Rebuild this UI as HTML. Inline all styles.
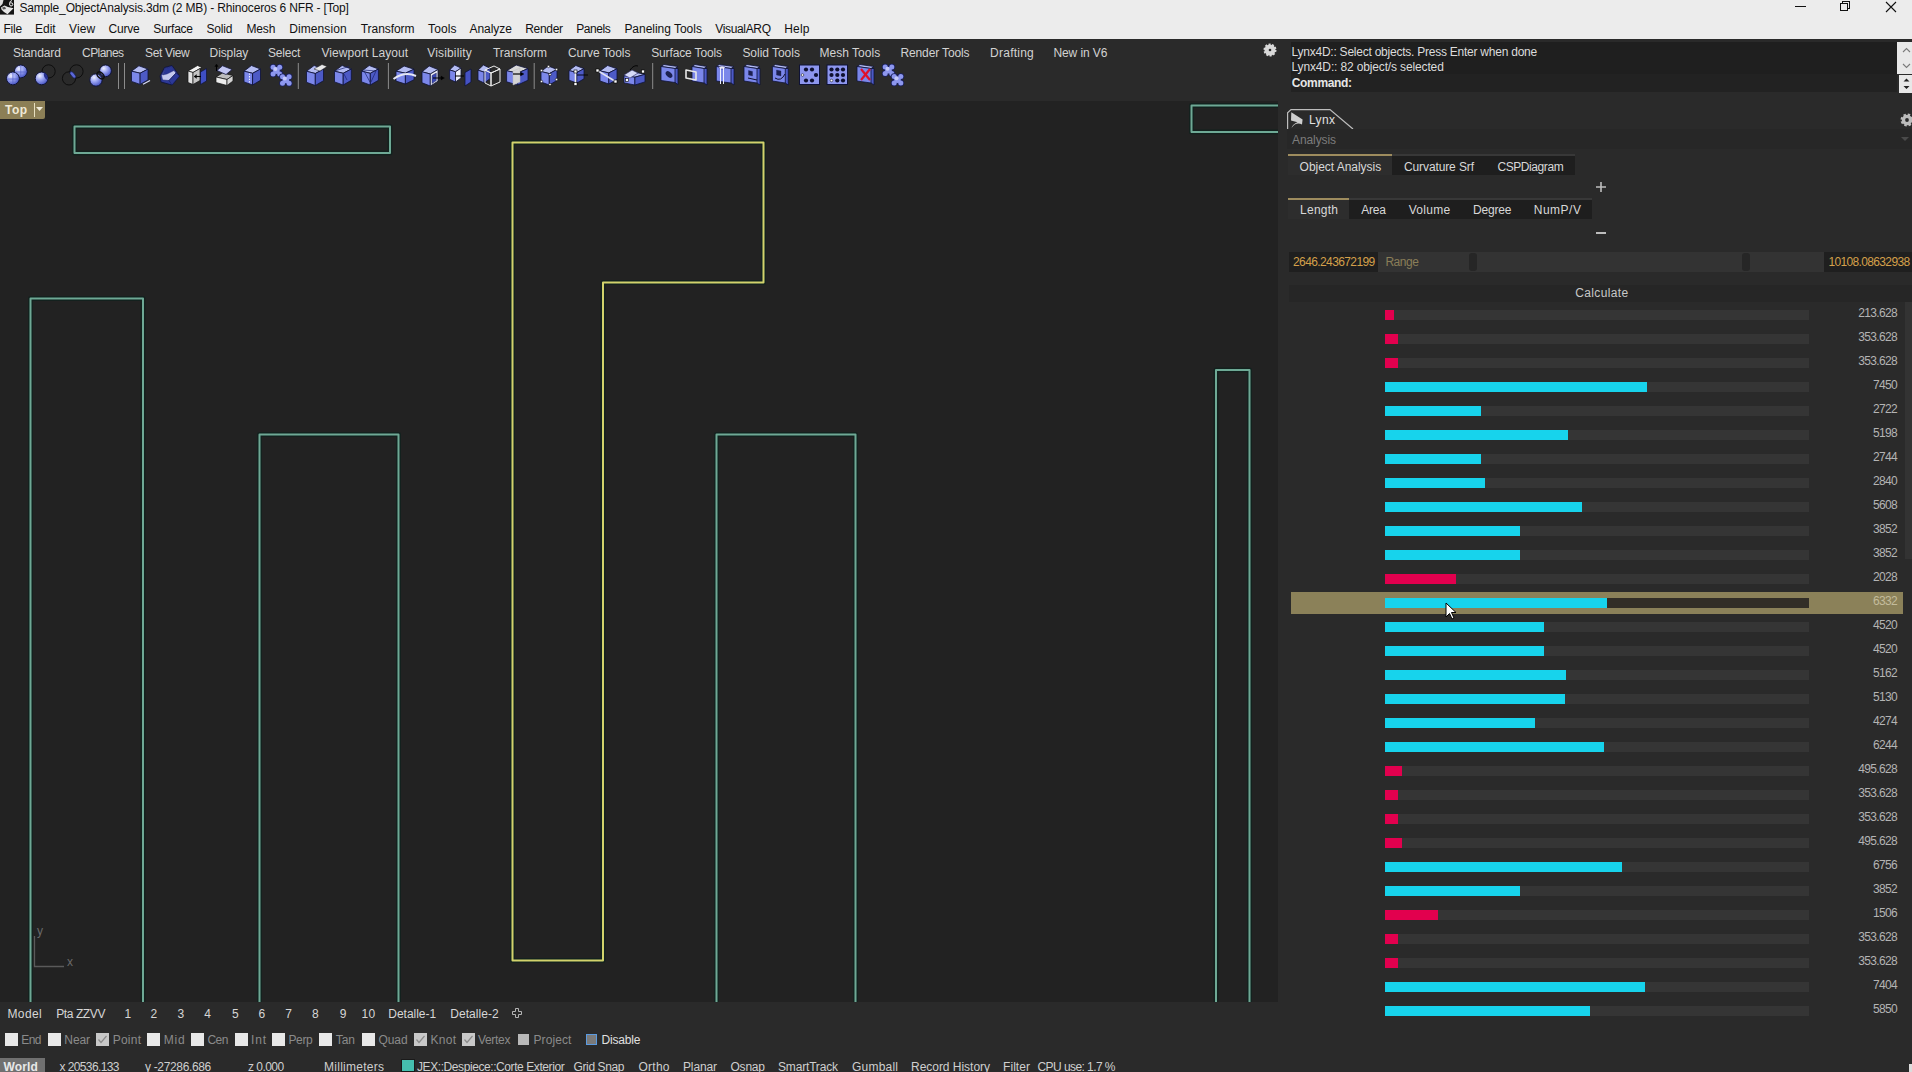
<!DOCTYPE html><html><head><meta charset="utf-8"><style>
*{margin:0;padding:0;box-sizing:border-box}
html,body{width:1912px;height:1072px;overflow:hidden;background:#2a2a2a;font-family:"Liberation Sans",sans-serif;font-size:12px}
.a{position:absolute;white-space:nowrap}
.row{position:absolute;left:1385px;width:424px;height:10px;background:#353535}
.c{background:#17d3ec}
.r{background:#e2004e}
.ck{position:absolute;top:1033px;width:13px;height:13px;background:#e8e8e8}
</style></head><body>
<div class="a" style="left:0px;top:0px;width:1912px;height:39px;background:#ececec;"></div>
<svg class="a" style="left:0;top:0" width="15" height="16" viewBox="0 0 15 16"><rect x="0" y="0" width="14" height="14.6" fill="#151515"/><path d="M0,0H3.5L2.5,4L0,6.5Z" fill="#dcdcdc"/><path d="M1,7.5L4.5,5.5L8,7L13.5,8.2L7.5,14.2L4,12L1.5,9.5Z" fill="#e6e6e6"/><path d="M2,7.5L5,6.8L6,9L3,9.5Z" fill="#555"/><path d="M12,0.5Q9.5,1 9.5,3.8Q9.5,6 11,6Q12.8,6 12.8,4.3Q12.8,2.8 11,2.8Q10.3,2.8 9.8,3.3" fill="none" stroke="#f0f0f0" stroke-width="1"/></svg>
<div class="a" style="left:19.4px;top:1px;color:#111;font-weight:400;font-size:12px;letter-spacing:-0.159px;">Sample_ObjectAnalysis.3dm (2 MB) - Rhinoceros 6 NFR - [Top]</div>
<div class="a" style="left:3.5px;top:22px;color:#111;font-weight:400;font-size:12px;letter-spacing:-0.248px;">File</div>
<div class="a" style="left:35.1px;top:22px;color:#111;font-weight:400;font-size:12px;letter-spacing:-0.029px;">Edit</div>
<div class="a" style="left:69px;top:22px;color:#111;font-weight:400;font-size:12px;letter-spacing:0.101px;">View</div>
<div class="a" style="left:108.5px;top:22px;color:#111;font-weight:400;font-size:12px;letter-spacing:-0.179px;">Curve</div>
<div class="a" style="left:153.2px;top:22px;color:#111;font-weight:400;font-size:12px;letter-spacing:-0.260px;">Surface</div>
<div class="a" style="left:206.4px;top:22px;color:#111;font-weight:400;font-size:12px;letter-spacing:-0.147px;">Solid</div>
<div class="a" style="left:246.5px;top:22px;color:#111;font-weight:400;font-size:12px;letter-spacing:-0.148px;">Mesh</div>
<div class="a" style="left:289.2px;top:22px;color:#111;font-weight:400;font-size:12px;letter-spacing:0.100px;">Dimension</div>
<div class="a" style="left:360.8px;top:22px;color:#111;font-weight:400;font-size:12px;letter-spacing:-0.067px;">Transform</div>
<div class="a" style="left:428px;top:22px;color:#111;font-weight:400;font-size:12px;letter-spacing:0.146px;">Tools</div>
<div class="a" style="left:469.5px;top:22px;color:#111;font-weight:400;font-size:12px;letter-spacing:-0.051px;">Analyze</div>
<div class="a" style="left:525.2px;top:22px;color:#111;font-weight:400;font-size:12px;letter-spacing:-0.292px;">Render</div>
<div class="a" style="left:576.2px;top:22px;color:#111;font-weight:400;font-size:12px;letter-spacing:-0.421px;">Panels</div>
<div class="a" style="left:624.4px;top:22px;color:#111;font-weight:400;font-size:12px;letter-spacing:-0.026px;">Paneling Tools</div>
<div class="a" style="left:715.2px;top:22px;color:#111;font-weight:400;font-size:12px;letter-spacing:-0.336px;">VisualARQ</div>
<div class="a" style="left:784.3px;top:22px;color:#111;font-weight:400;font-size:12px;letter-spacing:0.138px;">Help</div>
<div class="a" style="left:1795px;top:6px;width:11px;height:1px;background:#111;"></div>
<div class="a" style="left:1842px;top:1px;width:8px;height:8px;border:1px solid #111"></div><div class="a" style="left:1840px;top:3px;width:8px;height:8px;border:1px solid #111;background:#ececec"></div>
<svg class="a" style="left:1885px;top:1px" width="12" height="12"><path d="M1,1L11,11M11,1L1,11" stroke="#111" stroke-width="1.1"/></svg>
<div class="a" style="left:13px;top:46px;color:#d2d2d2;font-weight:400;font-size:12px;letter-spacing:-0.129px;">Standard</div>
<div class="a" style="left:82.1px;top:46px;color:#d2d2d2;font-weight:400;font-size:12px;letter-spacing:-0.577px;">CPlanes</div>
<div class="a" style="left:145.1px;top:46px;color:#d2d2d2;font-weight:400;font-size:12px;letter-spacing:-0.349px;">Set View</div>
<div class="a" style="left:209.6px;top:46px;color:#d2d2d2;font-weight:400;font-size:12px;letter-spacing:-0.110px;">Display</div>
<div class="a" style="left:268.1px;top:46px;color:#d2d2d2;font-weight:400;font-size:12px;letter-spacing:-0.232px;">Select</div>
<div class="a" style="left:321.4px;top:46px;color:#d2d2d2;font-weight:400;font-size:12px;letter-spacing:0.068px;">Viewport Layout</div>
<div class="a" style="left:427.3px;top:46px;color:#d2d2d2;font-weight:400;font-size:12px;letter-spacing:0.153px;">Visibility</div>
<div class="a" style="left:493px;top:46px;color:#d2d2d2;font-weight:400;font-size:12px;letter-spacing:-0.029px;">Transform</div>
<div class="a" style="left:567.9px;top:46px;color:#d2d2d2;font-weight:400;font-size:12px;letter-spacing:-0.064px;">Curve Tools</div>
<div class="a" style="left:651.2px;top:46px;color:#d2d2d2;font-weight:400;font-size:12px;letter-spacing:-0.142px;">Surface Tools</div>
<div class="a" style="left:742.4px;top:46px;color:#d2d2d2;font-weight:400;font-size:12px;letter-spacing:-0.033px;">Solid Tools</div>
<div class="a" style="left:819.4px;top:46px;color:#d2d2d2;font-weight:400;font-size:12px;letter-spacing:0.035px;">Mesh Tools</div>
<div class="a" style="left:900.5px;top:46px;color:#d2d2d2;font-weight:400;font-size:12px;letter-spacing:-0.136px;">Render Tools</div>
<div class="a" style="left:990.1px;top:46px;color:#d2d2d2;font-weight:400;font-size:12px;letter-spacing:0.238px;">Drafting</div>
<div class="a" style="left:1053.4px;top:46px;color:#d2d2d2;font-weight:400;font-size:12px;letter-spacing:-0.088px;">New in V6</div>
<svg class="a" style="left:0;top:0" width="920" height="95" viewBox="0 0 920 95">
<defs><radialGradient id="sg" cx="0.35" cy="0.3" r="0.75"><stop offset="0" stop-color="#eef0ff"/><stop offset="0.45" stop-color="#9aa4f2"/><stop offset="1" stop-color="#4350c0"/></radialGradient></defs>
<circle cx="20.8" cy="71.4" r="6.4" fill="url(#sg)" stroke="#0e1236" stroke-width="1"/>
<circle cx="12.9" cy="78.4" r="6.4" fill="url(#sg)" stroke="#0e1236" stroke-width="1"/>
<line x1="12.9" y1="72" x2="12.9" y2="84.5" stroke="#5560c8" stroke-width="0.7"/><line x1="7" y1="79" x2="19" y2="79" stroke="#5560c8" stroke-width="0.7"/>
<line x1="20.8" y1="65.2" x2="20.8" y2="77.5" stroke="#5560c8" stroke-width="0.7"/><line x1="14.8" y1="72" x2="27" y2="72" stroke="#5560c8" stroke-width="0.7"/>
<circle cx="48.6" cy="71.4" r="6.6" fill="none" stroke="#0a0a0a" stroke-width="0.9"/>
<circle cx="41.6" cy="78.4" r="6.4" fill="url(#sg)" stroke="#0e1236" stroke-width="1"/>
<path d="M44,72.5 Q49,75 47,80 Q43,77 44,72.5Z" fill="#26308e"/>
<circle cx="76.5" cy="71.4" r="6.6" fill="none" stroke="#0a0a0a" stroke-width="0.9"/>
<circle cx="69" cy="78.4" r="6.6" fill="none" stroke="#0a0a0a" stroke-width="0.9"/>
<ellipse cx="72.9" cy="74.9" rx="1.8" ry="4" transform="rotate(-40 72.9 74.9)" fill="#5c68d8" stroke="#101848" stroke-width="0.6"/>
<circle cx="105.5" cy="70.8" r="5.9" fill="url(#sg)" stroke="#0e1236" stroke-width="1"/>
<circle cx="96" cy="80" r="6.2" fill="url(#sg)" stroke="#0e1236" stroke-width="1"/>
<ellipse cx="100.6" cy="75.4" rx="2.6" ry="4.2" transform="rotate(-45 100.6 75.4)" fill="none" stroke="#101010" stroke-width="1.4"/>
<line x1="118.5" y1="63" x2="118.5" y2="89" stroke="#8c8c8c" stroke-width="1"/>
<line x1="124.5" y1="63" x2="124.5" y2="89" stroke="#8c8c8c" stroke-width="1"/>
<polygon points="131.5,71.2 138.9,65.8 148.0,69.1 140.1,73.2" fill="#b4bcf2" stroke="#0e1236" stroke-width="0.8" stroke-linejoin="round"/><polygon points="131.5,71.2 140.1,73.2 140.1,84.4 131.5,81.4" fill="#7b87ea" stroke="#0e1236" stroke-width="0.8" stroke-linejoin="round"/><polygon points="140.1,73.2 148.0,69.1 148.0,79.9 140.1,84.4" fill="#4d5ac6" stroke="#0e1236" stroke-width="0.8" stroke-linejoin="round"/><line x1="143" y1="84.2" x2="150" y2="80.5" stroke="#d8dcf8" stroke-width="1.3"/>
<polygon points="160.0,76.0 164.5,67.5 172.0,65.5 179.5,76.0 172.0,85.0 161.0,82.0" fill="#2c3896" stroke="#0e1236" stroke-width="0.8" stroke-linejoin="round"/>
<polygon points="161.5,75.5 165.5,68.5 171.5,67.0 176.0,73.0 169.0,80.5 162.5,80.0" fill="#c4c9ee" stroke="#18206a" stroke-width="0.6" stroke-linejoin="round"/>
<polygon points="165.5,68.5 171.5,67.0 174.0,70.5 167.0,74.0 162.5,75.0" fill="#2a3694" stroke="#18206a" stroke-width="0.4" stroke-linejoin="round"/>
<polygon points="169.0,80.5 176.0,73.0 179.5,76.0 172.0,85.0" fill="#2c3896" stroke="#10184a" stroke-width="0.5" stroke-linejoin="round"/>
<polygon points="188.0,71.0 197.5,65.5 202.0,67.5 193.0,72.5" fill="#f2f2f2" stroke="#111" stroke-width="0.7" stroke-linejoin="round"/>
<polygon points="188.0,71.0 193.0,72.5 193.0,84.5 188.0,82.5" fill="#e4e4e4" stroke="#111" stroke-width="0.7" stroke-linejoin="round"/>
<polygon points="193.0,72.5 200.0,68.5 200.0,80.5 193.0,84.5" fill="#c4c4c4" stroke="#111" stroke-width="0.7" stroke-linejoin="round"/>
<polygon points="200.5,72.0 206.5,68.5 206.5,81.0 200.5,84.5" fill="#3e4ec2" stroke="#0e1236" stroke-width="0.7" stroke-linejoin="round"/>
<line x1="194.5" y1="76.5" x2="201" y2="76.5" stroke="#000" stroke-width="1.1"/><polygon points="194.0,76.5 196.5,74.5 196.5,78.5" fill="#000" stroke="#000" stroke-width="0.3" stroke-linejoin="round"/>
<polygon points="216.0,77.0 222.5,73.0 233.0,75.5 227.0,79.5" fill="#bdbdbd" stroke="#111" stroke-width="0.7" stroke-linejoin="round"/>
<polygon points="216.0,77.0 227.0,79.5 227.0,85.5 216.0,82.5" fill="#ececec" stroke="#111" stroke-width="0.7" stroke-linejoin="round"/>
<polygon points="227.0,79.5 233.0,75.5 233.0,81.0 227.0,85.5" fill="#d4d4d4" stroke="#111" stroke-width="0.7" stroke-linejoin="round"/>
<polygon points="217.0,70.5 222.5,65.8 232.0,69.5 226.0,74.5" fill="#c2c6f2" stroke="#101440" stroke-width="0.7" stroke-linejoin="round"/>
<line x1="216.5" y1="71" x2="216.5" y2="65" stroke="#000" stroke-width="1"/><polygon points="216.5,64.0 214.8,66.5 218.2,66.5" fill="#000" stroke="#000" stroke-width="0.3" stroke-linejoin="round"/>
<polygon points="244.0,71.2 251.4,65.5 260.5,69.0 252.6,73.3" fill="#b4bcf2" stroke="#0e1236" stroke-width="0.8" stroke-linejoin="round"/><polygon points="244.0,71.2 252.6,73.3 252.6,85.0 244.0,81.9" fill="#7b87ea" stroke="#0e1236" stroke-width="0.8" stroke-linejoin="round"/><polygon points="252.6,73.3 260.5,69.0 260.5,80.3 252.6,85.0" fill="#4d5ac6" stroke="#0e1236" stroke-width="0.8" stroke-linejoin="round"/>
<line x1="249.5" y1="73.5" x2="249.5" y2="83" stroke="#f0f2ff" stroke-width="1.1" stroke-dasharray="1.3 1.3"/>
<circle cx="276.4" cy="70.6" r="4.1" fill="#1a2060"/><circle cx="273.1" cy="67.3" r="3.3" fill="#1a2060"/><circle cx="279.7" cy="67.3" r="3.3" fill="#1a2060"/><circle cx="273.1" cy="73.9" r="3.3" fill="#1a2060"/><circle cx="279.7" cy="73.9" r="3.3" fill="#1a2060"/><circle cx="276.4" cy="70.6" r="3.3" fill="#8d97ee"/><circle cx="273.1" cy="67.3" r="2.5" fill="#8d97ee"/><circle cx="279.7" cy="67.3" r="2.5" fill="#8d97ee"/><circle cx="273.1" cy="73.9" r="2.5" fill="#8d97ee"/><circle cx="279.7" cy="73.9" r="2.5" fill="#8d97ee"/><circle cx="275.4" cy="69.1" r="2" fill="#c4c9f8"/>
<circle cx="285.8" cy="80.0" r="4.1" fill="#1a2060"/><circle cx="282.5" cy="76.7" r="3.3" fill="#1a2060"/><circle cx="289.1" cy="76.7" r="3.3" fill="#1a2060"/><circle cx="282.5" cy="83.3" r="3.3" fill="#1a2060"/><circle cx="289.1" cy="83.3" r="3.3" fill="#1a2060"/><circle cx="285.8" cy="80.0" r="3.3" fill="#8d97ee"/><circle cx="282.5" cy="76.7" r="2.5" fill="#8d97ee"/><circle cx="289.1" cy="76.7" r="2.5" fill="#8d97ee"/><circle cx="282.5" cy="83.3" r="2.5" fill="#8d97ee"/><circle cx="289.1" cy="83.3" r="2.5" fill="#8d97ee"/><circle cx="284.8" cy="78.5" r="2" fill="#c4c9f8"/>
<line x1="298.3" y1="63" x2="298.3" y2="89" stroke="#8c8c8c" stroke-width="1"/>
<polygon points="306.5,71.3 314.1,65.5 323.5,69.1 315.3,73.5" fill="#b4bcf2" stroke="#0e1236" stroke-width="0.8" stroke-linejoin="round"/><polygon points="306.5,71.3 315.3,73.5 315.3,85.5 306.5,82.3" fill="#7b87ea" stroke="#0e1236" stroke-width="0.8" stroke-linejoin="round"/><polygon points="315.3,73.5 323.5,69.1 323.5,80.7 315.3,85.5" fill="#4d5ac6" stroke="#0e1236" stroke-width="0.8" stroke-linejoin="round"/>
<polygon points="314.0,69.0 322.0,64.5 327.0,66.5 320.0,71.0" fill="#e8e8e8" stroke="#202020" stroke-width="0.5" stroke-linejoin="round"/>
<polygon points="334.5,71.2 342.1,65.5 351.3,69.0 343.2,73.3" fill="#b4bcf2" stroke="#0e1236" stroke-width="0.8" stroke-linejoin="round"/><polygon points="334.5,71.2 343.2,73.3 343.2,85.0 334.5,81.9" fill="#7b87ea" stroke="#0e1236" stroke-width="0.8" stroke-linejoin="round"/><polygon points="343.2,73.3 351.3,69.0 351.3,80.3 343.2,85.0" fill="#4d5ac6" stroke="#0e1236" stroke-width="0.8" stroke-linejoin="round"/><line x1="336" y1="70.5" x2="349" y2="66.5" stroke="#1a2270" stroke-width="0.7"/><line x1="344" y1="74" x2="347" y2="80" stroke="#1a2270" stroke-width="0.7"/>
<polygon points="361.6,71.2 369.2,65.5 378.4,69.0 370.3,73.3" fill="#b4bcf2" stroke="#0e1236" stroke-width="0.8" stroke-linejoin="round"/><polygon points="361.6,71.2 370.3,73.3 370.3,85.0 361.6,81.9" fill="#7b87ea" stroke="#0e1236" stroke-width="0.8" stroke-linejoin="round"/><polygon points="370.3,73.3 378.4,69.0 378.4,80.3 370.3,85.0" fill="#4d5ac6" stroke="#0e1236" stroke-width="0.8" stroke-linejoin="round"/><line x1="363" y1="70" x2="376" y2="71" stroke="#1a2270" stroke-width="0.7"/><line x1="364" y1="71" x2="370" y2="82" stroke="#1a2270" stroke-width="0.7"/><line x1="376" y1="71" x2="371" y2="82" stroke="#1a2270" stroke-width="0.7"/>
<line x1="388.4" y1="63" x2="388.4" y2="89" stroke="#8c8c8c" stroke-width="1"/>
<polygon points="396.0,71.2 404.1,66.0 414.0,69.2 405.4,73.2" fill="#b4bcf2" stroke="#0e1236" stroke-width="0.8" stroke-linejoin="round"/><polygon points="396.0,71.2 405.4,73.2 405.4,84.0 396.0,81.1" fill="#7b87ea" stroke="#0e1236" stroke-width="0.8" stroke-linejoin="round"/><polygon points="405.4,73.2 414.0,69.2 414.0,79.7 405.4,84.0" fill="#4d5ac6" stroke="#0e1236" stroke-width="0.8" stroke-linejoin="round"/>
<path d="M393.5,79 Q405,71 416,76" fill="none" stroke="#e4e6f4" stroke-width="2"/>
<polygon points="422.0,71.8 429.2,66.0 438.0,69.6 430.3,74.0" fill="#b4bcf2" stroke="#0e1236" stroke-width="0.8" stroke-linejoin="round"/><polygon points="422.0,71.8 430.3,74.0 430.3,86.0 422.0,82.8" fill="#7b87ea" stroke="#0e1236" stroke-width="0.8" stroke-linejoin="round"/><polygon points="430.3,74.0 438.0,69.6 438.0,81.2 430.3,86.0" fill="#eceef8" stroke="#0e1236" stroke-width="0.8" stroke-linejoin="round"/>
<polygon points="432.0,75.5 436.3,73.0 436.3,80.6 432.0,83.6" fill="#3a48b4" stroke="#1a1a40" stroke-width="0.4" stroke-linejoin="round"/>
<line x1="433" y1="78" x2="443" y2="78" stroke="#000" stroke-width="1"/><polygon points="444.5,78.0 441.0,76.0 441.0,80.0" fill="#000" stroke="#000" stroke-width="0.3" stroke-linejoin="round"/>
<polygon points="449.6,69.9 454.7,65.0 461.0,68.1 455.5,71.8" fill="#b4bcf2" stroke="#0e1236" stroke-width="0.8" stroke-linejoin="round"/><polygon points="449.6,69.9 455.5,71.8 455.5,82.0 449.6,79.3" fill="#7b87ea" stroke="#0e1236" stroke-width="0.8" stroke-linejoin="round"/><polygon points="455.5,71.8 461.0,68.1 461.0,77.9 455.5,82.0" fill="#eceef8" stroke="#0e1236" stroke-width="0.8" stroke-linejoin="round"/>
<polygon points="465.0,72.5 471.0,69.0 471.0,82.0 465.0,86.0" fill="#4552c4" stroke="#0e1236" stroke-width="0.8" stroke-linejoin="round"/>
<line x1="455" y1="76" x2="464" y2="76" stroke="#000" stroke-width="1"/>
<polygon points="478.0,70.2 483.4,65.0 490.0,68.2 484.2,72.2" fill="#b4bcf2" stroke="#0e1236" stroke-width="0.8" stroke-linejoin="round"/><polygon points="478.0,70.2 484.2,72.2 484.2,83.0 478.0,80.1" fill="#7b87ea" stroke="#0e1236" stroke-width="0.8" stroke-linejoin="round"/><polygon points="484.2,72.2 490.0,68.2 490.0,78.7 484.2,83.0" fill="#4d5ac6" stroke="#0e1236" stroke-width="0.8" stroke-linejoin="round"/>
<polygon points="485.0,70.0 494.0,66.0 500.0,69.0 491.0,73.0" fill="none" stroke="#eeeeee" stroke-width="1" stroke-linejoin="round"/><polygon points="485.0,70.0 491.0,73.0 491.0,86.0 485.0,83.0" fill="none" stroke="#eeeeee" stroke-width="1" stroke-linejoin="round"/><polygon points="491.0,73.0 500.0,69.0 500.0,82.0 491.0,86.0" fill="none" stroke="#eeeeee" stroke-width="1" stroke-linejoin="round"/>
<polygon points="506.6,70.8 516.2,65.0 528.0,68.6 517.7,73.0" fill="#d8d8d8" stroke="#0e1236" stroke-width="0.8" stroke-linejoin="round"/><polygon points="506.6,70.8 517.7,73.0 517.7,85.0 506.6,81.8" fill="#7b87ea" stroke="#0e1236" stroke-width="0.8" stroke-linejoin="round"/><polygon points="517.7,73.0 528.0,68.6 528.0,80.2 517.7,85.0" fill="#4d5ac6" stroke="#0e1236" stroke-width="0.8" stroke-linejoin="round"/>
<polygon points="513.0,71.0 520.0,68.0 520.0,82.0 513.0,85.0" fill="#d4d4d4" stroke="#bbbbbb" stroke-width="0.5" stroke-linejoin="round"/>
<line x1="513" y1="74" x2="522" y2="74" stroke="#000" stroke-width="1.2"/><polygon points="524.0,74.0 520.5,72.0 520.5,76.0" fill="#000" stroke="#000" stroke-width="0.3" stroke-linejoin="round"/>
<line x1="534.2" y1="63" x2="534.2" y2="89" stroke="#8c8c8c" stroke-width="1"/>
<polygon points="541.0,71.5 548.2,66.0 557.0,69.4 549.3,73.6" fill="#b4bcf2" stroke="#0e1236" stroke-width="0.8" stroke-linejoin="round"/><polygon points="541.0,71.5 549.3,73.6 549.3,85.0 541.0,82.0" fill="#7b87ea" stroke="#0e1236" stroke-width="0.8" stroke-linejoin="round"/><polygon points="549.3,73.6 557.0,69.4 557.0,80.4 549.3,85.0" fill="#4d5ac6" stroke="#0e1236" stroke-width="0.8" stroke-linejoin="round"/>
<circle cx="541.5" cy="70.5" r="1.2" fill="#fff" stroke="#000" stroke-width="0.6"/>
<circle cx="548.5" cy="66.5" r="1.2" fill="#fff" stroke="#000" stroke-width="0.6"/>
<circle cx="556.5" cy="69.5" r="1.2" fill="#fff" stroke="#000" stroke-width="0.6"/>
<circle cx="550" cy="74.5" r="1.2" fill="#fff" stroke="#000" stroke-width="0.6"/>
<circle cx="541.5" cy="81.5" r="1.2" fill="#fff" stroke="#000" stroke-width="0.6"/>
<circle cx="550" cy="84.5" r="1.2" fill="#fff" stroke="#000" stroke-width="0.6"/>
<circle cx="556.5" cy="79.5" r="1.2" fill="#fff" stroke="#000" stroke-width="0.6"/>
<polygon points="569.0,70.6 575.8,65.5 584.0,68.7 576.8,72.5" fill="#b4bcf2" stroke="#0e1236" stroke-width="0.8" stroke-linejoin="round"/><polygon points="569.0,70.6 576.8,72.5 576.8,83.0 569.0,80.2" fill="#7b87ea" stroke="#0e1236" stroke-width="0.8" stroke-linejoin="round"/><polygon points="576.8,72.5 584.0,68.7 584.0,78.8 576.8,83.0" fill="#4d5ac6" stroke="#0e1236" stroke-width="0.8" stroke-linejoin="round"/>
<line x1="575.5" y1="71" x2="575.5" y2="83.5" stroke="#f0f0f0" stroke-width="1.6"/><rect x="574.0" y="70.0" width="3" height="3" fill="#fff" stroke="#000" stroke-width="0.6"/><rect x="574.0" y="82.5" width="3" height="3" fill="#fff" stroke="#000" stroke-width="0.6"/><line x1="577" y1="75" x2="588" y2="75" stroke="#000" stroke-width="0.9"/>
<polygon points="600.0,70.9 607.6,65.5 617.0,68.8 608.8,72.9" fill="#b4bcf2" stroke="#0e1236" stroke-width="0.8" stroke-linejoin="round"/><polygon points="600.0,70.9 608.8,72.9 608.8,84.0 600.0,81.0" fill="#7b87ea" stroke="#0e1236" stroke-width="0.8" stroke-linejoin="round"/><polygon points="608.8,72.9 617.0,68.8 617.0,79.6 608.8,84.0" fill="#4d5ac6" stroke="#0e1236" stroke-width="0.8" stroke-linejoin="round"/>
<line x1="597.5" y1="70.5" x2="615.5" y2="81.5" stroke="#e0e2f0" stroke-width="1.6"/><rect x="596.0" y="69.0" width="3" height="3" fill="#fff" stroke="#000" stroke-width="0.6"/><rect x="614.0" y="80.0" width="3" height="3" fill="#fff" stroke="#000" stroke-width="0.6"/>
<polygon points="624.0,75.8 633.5,72.0 645.0,74.3 634.9,77.2" fill="#b4bcf2" stroke="#0e1236" stroke-width="0.8" stroke-linejoin="round"/><polygon points="624.0,75.8 634.9,77.2 634.9,85.0 624.0,82.9" fill="#7b87ea" stroke="#0e1236" stroke-width="0.8" stroke-linejoin="round"/><polygon points="634.9,77.2 645.0,74.3 645.0,81.9 634.9,85.0" fill="#4d5ac6" stroke="#0e1236" stroke-width="0.8" stroke-linejoin="round"/><polygon points="624.0,75.0 632.0,70.0 638.0,73.0 630.0,78.0" fill="#d6daf8" stroke="#2a2a60" stroke-width="0.6" stroke-linejoin="round"/>
<rect x="625.5" y="78.5" width="3" height="3" fill="#fff" stroke="#000" stroke-width="0.6"/><rect x="641.5" y="70.0" width="3" height="3" fill="#fff" stroke="#000" stroke-width="0.6"/><path d="M630,70 Q634,64.5 638,66" fill="none" stroke="#000" stroke-width="0.9"/>
<line x1="652.7" y1="63" x2="652.7" y2="89" stroke="#8c8c8c" stroke-width="1"/>
<polygon points="661.0,66.5 675.0,68.5 678.0,68.5 678.0,84.5 675.0,82.5" fill="#4d5ac6" stroke="#0e1236" stroke-width="0.8" stroke-linejoin="round"/><polygon points="661.0,66.5 664.0,64.5 678.0,66.5 675.0,68.5" fill="#b4bcf2" stroke="#0e1236" stroke-width="0.8" stroke-linejoin="round"/><polygon points="661.0,66.5 675.0,68.5 675.0,82.5 661.0,80.5" fill="#7b87ea" stroke="#0e1236" stroke-width="0.8" stroke-linejoin="round"/><ellipse cx="669" cy="74.5" rx="2.5" ry="4" transform="rotate(-45 669 74.5)" fill="#1c2050"/>
<polygon points="692.0,66.5 704.0,68.5 707.0,68.5 707.0,85.0 704.0,83.0" fill="#4d5ac6" stroke="#0e1236" stroke-width="0.8" stroke-linejoin="round"/><polygon points="692.0,66.5 695.0,64.5 707.0,66.5 704.0,68.5" fill="#b4bcf2" stroke="#0e1236" stroke-width="0.8" stroke-linejoin="round"/><polygon points="692.0,66.5 704.0,68.5 704.0,83.0 692.0,81.0" fill="#7b87ea" stroke="#0e1236" stroke-width="0.8" stroke-linejoin="round"/><polygon points="686.0,70.0 696.0,72.0 696.0,80.0 686.0,78.0" fill="none" stroke="#e8e8e8" stroke-width="1.6" stroke-linejoin="round"/>
<polygon points="716.3,66.5 731.0,68.5 734.0,68.5 734.0,85.0 731.0,83.0" fill="#4d5ac6" stroke="#0e1236" stroke-width="0.8" stroke-linejoin="round"/><polygon points="716.3,66.5 719.3,64.5 734.0,66.5 731.0,68.5" fill="#b4bcf2" stroke="#0e1236" stroke-width="0.8" stroke-linejoin="round"/><polygon points="716.3,66.5 731.0,68.5 731.0,83.0 716.3,81.0" fill="#7b87ea" stroke="#0e1236" stroke-width="0.8" stroke-linejoin="round"/><ellipse cx="722" cy="67.5" rx="3" ry="1.6" fill="#e8e8f8" stroke="#2a2f80" stroke-width="0.5"/><line x1="720.5" y1="68" x2="720.5" y2="84" stroke="#eef0ff" stroke-width="1"/><line x1="723.5" y1="68" x2="723.5" y2="84" stroke="#eef0ff" stroke-width="1"/>
<polygon points="744.0,66.5 757.0,68.5 760.0,68.5 760.0,85.0 757.0,83.0" fill="#4d5ac6" stroke="#0e1236" stroke-width="0.8" stroke-linejoin="round"/><polygon points="744.0,66.5 747.0,64.5 760.0,66.5 757.0,68.5" fill="#b4bcf2" stroke="#0e1236" stroke-width="0.8" stroke-linejoin="round"/><polygon points="744.0,66.5 757.0,68.5 757.0,83.0 744.0,81.0" fill="#7b87ea" stroke="#0e1236" stroke-width="0.8" stroke-linejoin="round"/><polygon points="748.5,70.5 752.5,71.5 752.5,76.0 748.5,75.0" fill="#1c2050" stroke="#1c2050" stroke-width="0.3" stroke-linejoin="round"/><line x1="748" y1="78" x2="757" y2="80" stroke="#101030" stroke-width="1"/>
<polygon points="772.4,66.5 785.3,68.5 788.3,68.5 788.3,85.0 785.3,83.0" fill="#4d5ac6" stroke="#0e1236" stroke-width="0.8" stroke-linejoin="round"/><polygon points="772.4,66.5 775.4,64.5 788.3,66.5 785.3,68.5" fill="#b4bcf2" stroke="#0e1236" stroke-width="0.8" stroke-linejoin="round"/><polygon points="772.4,66.5 785.3,68.5 785.3,83.0 772.4,81.0" fill="#7b87ea" stroke="#0e1236" stroke-width="0.8" stroke-linejoin="round"/><polygon points="776.5,70.0 781.0,71.0 781.0,76.0 776.5,75.0" fill="#1c2050" stroke="#1c2050" stroke-width="0.3" stroke-linejoin="round"/><path d="M775,78 Q781,82 785,74" fill="none" stroke="#101030" stroke-width="1"/>
<rect x="799.5" y="65" width="20" height="19.5" fill="#8d96ee" stroke="#0e1236" stroke-width="1"/>
<circle cx="806" cy="69.5" r="2.1" fill="#0e1030"/>
<circle cx="812" cy="69.5" r="2.1" fill="#0e1030"/>
<circle cx="816" cy="75" r="2.1" fill="#0e1030"/>
<circle cx="812" cy="80.5" r="2.1" fill="#0e1030"/>
<circle cx="806" cy="80.5" r="2.1" fill="#0e1030"/>
<circle cx="802.5" cy="75" r="1.3" fill="#fff" stroke="#000" stroke-width="0.5"/>
<rect x="827" y="65" width="20.5" height="19.5" fill="#8d96ee" stroke="#0e1236" stroke-width="1"/>
<circle cx="831.5" cy="69.5" r="2.1" fill="#0e1030"/>
<circle cx="831.5" cy="75" r="2.1" fill="#0e1030"/>
<circle cx="831.5" cy="80.5" r="1.3" fill="#fff" stroke="#000" stroke-width="0.5"/>
<circle cx="837.3" cy="69.5" r="2.1" fill="#0e1030"/>
<circle cx="837.3" cy="75" r="2.1" fill="#0e1030"/>
<circle cx="837.3" cy="80.5" r="2.1" fill="#0e1030"/>
<circle cx="843" cy="69.5" r="2.1" fill="#0e1030"/>
<circle cx="843" cy="75" r="2.1" fill="#0e1030"/>
<circle cx="843" cy="80.5" r="2.1" fill="#0e1030"/>
<polygon points="857.0,66.5 871.0,68.5 874.0,68.5 874.0,85.0 871.0,83.0" fill="#4d5ac6" stroke="#0e1236" stroke-width="0.8" stroke-linejoin="round"/><polygon points="857.0,66.5 860.0,64.5 874.0,66.5 871.0,68.5" fill="#b4bcf2" stroke="#0e1236" stroke-width="0.8" stroke-linejoin="round"/><polygon points="857.0,66.5 871.0,68.5 871.0,83.0 857.0,81.0" fill="#7b87ea" stroke="#0e1236" stroke-width="0.8" stroke-linejoin="round"/><line x1="861" y1="69" x2="870" y2="80" stroke="#e0102a" stroke-width="2.2"/><line x1="870" y1="69" x2="861" y2="80" stroke="#e0102a" stroke-width="2.2"/>
<circle cx="888.5" cy="70.3" r="4.1" fill="#1a2060"/><circle cx="885.2" cy="67.0" r="3.3" fill="#1a2060"/><circle cx="891.8" cy="67.0" r="3.3" fill="#1a2060"/><circle cx="885.2" cy="73.6" r="3.3" fill="#1a2060"/><circle cx="891.8" cy="73.6" r="3.3" fill="#1a2060"/><circle cx="888.5" cy="70.3" r="3.3" fill="#8d97ee"/><circle cx="885.2" cy="67.0" r="2.5" fill="#8d97ee"/><circle cx="891.8" cy="67.0" r="2.5" fill="#8d97ee"/><circle cx="885.2" cy="73.6" r="2.5" fill="#8d97ee"/><circle cx="891.8" cy="73.6" r="2.5" fill="#8d97ee"/><circle cx="887.5" cy="68.8" r="2" fill="#c4c9f8"/>
<circle cx="897.5" cy="79.8" r="4.1" fill="#1a2060"/><circle cx="894.2" cy="76.5" r="3.3" fill="#1a2060"/><circle cx="900.8" cy="76.5" r="3.3" fill="#1a2060"/><circle cx="894.2" cy="83.1" r="3.3" fill="#1a2060"/><circle cx="900.8" cy="83.1" r="3.3" fill="#1a2060"/><circle cx="897.5" cy="79.8" r="3.3" fill="#8d97ee"/><circle cx="894.2" cy="76.5" r="2.5" fill="#8d97ee"/><circle cx="900.8" cy="76.5" r="2.5" fill="#8d97ee"/><circle cx="894.2" cy="83.1" r="2.5" fill="#8d97ee"/><circle cx="900.8" cy="83.1" r="2.5" fill="#8d97ee"/><circle cx="896.5" cy="78.3" r="2" fill="#c4c9f8"/>
</svg>
<div class="a" style="left:0px;top:101px;width:1278px;height:901px;background:#222222;"></div>
<svg class="a" style="left:0;top:0" width="1278" height="1002" viewBox="0 0 1278 1002">
<g fill="none" stroke-linejoin="round">
<path d="M74.5,126.5H390V153H74.5Z" stroke="#0a221d" stroke-width="5" opacity="0.6"/>
<path d="M30.5,1010V298.5H143V1010" stroke="#0a221d" stroke-width="5" opacity="0.6"/>
<path d="M259.5,1010V434.5H398.5V1010" stroke="#0a221d" stroke-width="5" opacity="0.6"/>
<path d="M716.5,1010V434.5H855.5V1010" stroke="#0a221d" stroke-width="5" opacity="0.6"/>
<path d="M1216,1010V370H1249.5V1010" stroke="#0a221d" stroke-width="5" opacity="0.6"/>
<path d="M1300,105.5H1191.5V132H1300" stroke="#0a221d" stroke-width="5" opacity="0.6"/>
<path d="M512.5,142.5H763.5V282.5H603V960.5H512.5Z" stroke="#0a221d" stroke-width="5" opacity="0.6"/>
<path d="M74.5,126.5H390V153H74.5Z" stroke="#6ea995" stroke-width="2"/>
<path d="M30.5,1010V298.5H143V1010" stroke="#6ea995" stroke-width="2"/>
<path d="M259.5,1010V434.5H398.5V1010" stroke="#6ea995" stroke-width="2"/>
<path d="M716.5,1010V434.5H855.5V1010" stroke="#6ea995" stroke-width="2"/>
<path d="M1216,1010V370H1249.5V1010" stroke="#6ea995" stroke-width="2"/>
<path d="M1300,105.5H1191.5V132H1300" stroke="#6ea995" stroke-width="2"/>
<path d="M512.5,142.5H763.5V282.5H603V960.5H512.5Z" stroke="#d2d36c" stroke-width="2"/>
</g>
<path d="M34.5,936V966.5H64" fill="none" stroke="#5a5a5a" stroke-width="1.3"/>
</svg>
<div class="a" style="left:37px;top:924px;color:#6a6a6a;font-weight:400;font-size:12px;">y</div>
<div class="a" style="left:67px;top:955px;color:#6a6a6a;font-weight:400;font-size:12px;">x</div>
<div class="a" style="left:0px;top:101px;width:45px;height:18px;background:#8c7f56;border-bottom-right-radius:2px"></div>
<div class="a" style="left:5px;top:103px;color:#f0ead8;font-weight:700;font-size:12px;letter-spacing:0.445px;">Top</div>
<div class="a" style="left:34px;top:103px;width:1px;height:14px;background:#e8e0c0;"></div>
<svg class="a" style="left:36px;top:107px" width="8" height="6"><path d="M0,0H7L3.5,4Z" fill="#f0ecdc"/></svg>
<div class="a" style="left:1278px;top:92px;width:634px;height:980px;background:#2a2a2a;"></div>
<svg class="a" style="left:1262px;top:43px" width="16" height="16" viewBox="0 0 16 16"><circle cx="8" cy="7" r="5.5" fill="#d8d8d8" stroke="#d8d8d8" stroke-width="2" stroke-dasharray="2 1.4"/><circle cx="8" cy="7" r="1.3" fill="#2a2a2a"/></svg>
<div class="a" style="left:1291px;top:42px;width:606px;height:32px;background:#1f1f1f;"></div>
<div class="a" style="left:1291px;top:74px;width:606px;height:18px;background:#222222;"></div>
<div class="a" style="left:1291.5px;top:45px;color:#dcdcdc;font-weight:400;font-size:12px;letter-spacing:-0.237px;">Lynx4D:: Select objects. Press Enter when done</div>
<div class="a" style="left:1291.5px;top:60px;color:#dcdcdc;font-weight:400;font-size:12px;letter-spacing:-0.143px;">Lynx4D:: 82 object/s selected</div>
<div class="a" style="left:1291.8px;top:76px;color:#e6e6e6;font-weight:700;font-size:12px;letter-spacing:-0.353px;">Command:</div>
<div class="a" style="left:1897px;top:42px;width:15px;height:32px;background:#e8e8e8;"></div>
<svg class="a" style="left:1897px;top:42px" width="15" height="51"><path d="M6,10L9.5,6.5L13,10M6,22L9.5,25.5L13,22" fill="none" stroke="#7a7a7a" stroke-width="1.1"/><rect x="2" y="33" width="13" height="18" fill="#e8e8e8"/><path d="M6.5,39.5H12.5L9.5,36.5Z M6.5,44H12.5L9.5,47Z" fill="#222"/></svg>
<svg class="a" style="left:1284px;top:106px" width="72" height="26"><path d="M3.6,23V6.8L7,3.6H46L69,23" fill="none" stroke="#bdbdbd" stroke-width="1.2"/><path d="M7.3,6.2L18.6,13.5L18,18.5Q12,15.5 7.5,22Q9,17.8 13.5,16.3L7,14.5Z" fill="#cfcfcf"/></svg>
<div class="a" style="left:1308.9px;top:113px;color:#e0e0e0;font-weight:400;font-size:12px;letter-spacing:0.431px;">Lynx</div>
<div class="a" style="left:1287px;top:129px;width:625px;height:20px;background:#272727;"></div>
<div class="a" style="left:1292.1px;top:133px;color:#7c7c7c;font-weight:400;font-size:12px;letter-spacing:-0.113px;">Analysis</div>
<svg class="a" style="left:1898px;top:111px" width="16" height="18" viewBox="0 0 16 18"><circle cx="9" cy="9" r="5.2" fill="#bcbcbc" stroke="#bcbcbc" stroke-width="2.6" stroke-dasharray="2.3 1.8"/><circle cx="9" cy="9" r="1.9" fill="#2a2a2a"/></svg>
<svg class="a" style="left:1901px;top:137px" width="9" height="5"><path d="M0,0H8L4,4Z" fill="#4a4a4a"/></svg>
<div class="a" style="left:1288px;top:154px;width:104px;height:21px;background:#2d2d2d;border-top:2px solid #9e8c5e"></div>
<div class="a" style="left:1392px;top:154px;width:92px;height:21px;background:#1e1e1e;border-top:2px solid #383838"></div>
<div class="a" style="left:1484px;top:154px;width:91px;height:21px;background:#1e1e1e;border-top:2px solid #383838"></div>
<div class="a" style="left:1299.6px;top:160px;color:#d8d8d8;font-weight:400;font-size:12px;letter-spacing:-0.032px;">Object Analysis</div>
<div class="a" style="left:1404px;top:160px;color:#d8d8d8;font-weight:400;font-size:12px;letter-spacing:-0.113px;">Curvature Srf</div>
<div class="a" style="left:1497.4px;top:160px;color:#d8d8d8;font-weight:400;font-size:12px;letter-spacing:-0.415px;">CSPDiagram</div>
<svg class="a" style="left:1595px;top:181px" width="12" height="12"><path d="M6,1V11M1,6H11" stroke="#bdbdbd" stroke-width="1.6"/></svg>
<div class="a" style="left:1288px;top:198px;width:61px;height:21px;background:#2d2d2d;border-top:2px solid #9e8c5e"></div>
<div class="a" style="left:1300.1px;top:203px;color:#d8d8d8;font-weight:400;font-size:12px;letter-spacing:0.219px;">Length</div>
<div class="a" style="left:1349px;top:198px;width:48.5px;height:21px;background:#1e1e1e;border-top:2px solid #383838"></div>
<div class="a" style="left:1361.2px;top:203px;color:#d8d8d8;font-weight:400;font-size:12px;letter-spacing:-0.220px;">Area</div>
<div class="a" style="left:1397.5px;top:198px;width:63.5px;height:21px;background:#1e1e1e;border-top:2px solid #383838"></div>
<div class="a" style="left:1408.7px;top:203px;color:#d8d8d8;font-weight:400;font-size:12px;letter-spacing:0.294px;">Volume</div>
<div class="a" style="left:1461px;top:198px;width:60.6px;height:21px;background:#1e1e1e;border-top:2px solid #383838"></div>
<div class="a" style="left:1473.1px;top:203px;color:#d8d8d8;font-weight:400;font-size:12px;letter-spacing:-0.212px;">Degree</div>
<div class="a" style="left:1521.6px;top:198px;width:70.0px;height:21px;background:#1e1e1e;border-top:2px solid #383838"></div>
<div class="a" style="left:1533.7px;top:203px;color:#d8d8d8;font-weight:400;font-size:12px;letter-spacing:0.522px;">NumP/V</div>
<div class="a" style="left:1596px;top:232px;width:10px;height:2px;background:#bdbdbd;"></div>
<div class="a" style="left:1289px;top:252px;width:89px;height:20px;background:#1f1f1f;"></div>
<div class="a" style="left:1293px;top:255px;color:#d4a04a;font-weight:400;font-size:12px;letter-spacing:-0.607px;">2646.243672199</div>
<div class="a" style="left:1378px;top:252px;width:446px;height:20px;background:#333333;"></div>
<div class="a" style="left:1385.4px;top:255px;color:#8a7e58;font-weight:400;font-size:12px;letter-spacing:-0.444px;">Range</div>
<div class="a" style="left:1469px;top:253px;width:8px;height:18px;background:#262626;border-radius:3px"></div>
<div class="a" style="left:1742px;top:253px;width:8px;height:18px;background:#262626;border-radius:3px"></div>
<div class="a" style="left:1824px;top:252px;width:88px;height:20px;background:#1f1f1f;"></div>
<div class="a" style="left:1828.5px;top:255px;color:#d4a04a;font-weight:400;font-size:12px;letter-spacing:-0.653px;">10108.08632938</div>
<div class="a" style="left:1289px;top:285px;width:623px;height:17px;background:#262626;"></div>
<div class="a" style="left:1575.2px;top:286px;color:#c8c8c8;font-weight:400;font-size:12px;letter-spacing:0.359px;">Calculate</div>
<div class="a" style="left:1905px;top:302px;width:7px;height:257px;background:#333333;"></div>
<div class="row" style="top:310px;background:#353535"><div class="a r" style="left:0;top:0;height:10px;width:8.5px"></div></div>
<div class="a" style="left:1858.2px;top:306px;color:#b4b4b4;font-weight:400;font-size:12px;letter-spacing:-0.632px;">213.628</div>
<div class="row" style="top:334px;background:#353535"><div class="a r" style="left:0;top:0;height:10px;width:12.5px"></div></div>
<div class="a" style="left:1858.2px;top:330px;color:#b4b4b4;font-weight:400;font-size:12px;letter-spacing:-0.632px;">353.628</div>
<div class="row" style="top:358px;background:#353535"><div class="a r" style="left:0;top:0;height:10px;width:12.5px"></div></div>
<div class="a" style="left:1858.2px;top:354px;color:#b4b4b4;font-weight:400;font-size:12px;letter-spacing:-0.632px;">353.628</div>
<div class="row" style="top:382px;background:#353535"><div class="a c" style="left:0;top:0;height:10px;width:262.0px"></div></div>
<div class="a" style="left:1873.0px;top:378px;color:#b4b4b4;font-weight:400;font-size:12px;letter-spacing:-0.634px;">7450</div>
<div class="row" style="top:406px;background:#353535"><div class="a c" style="left:0;top:0;height:10px;width:96.0px"></div></div>
<div class="a" style="left:1873.0px;top:402px;color:#b4b4b4;font-weight:400;font-size:12px;letter-spacing:-0.634px;">2722</div>
<div class="row" style="top:430px;background:#353535"><div class="a c" style="left:0;top:0;height:10px;width:183.0px"></div></div>
<div class="a" style="left:1873.0px;top:426px;color:#b4b4b4;font-weight:400;font-size:12px;letter-spacing:-0.634px;">5198</div>
<div class="row" style="top:454px;background:#353535"><div class="a c" style="left:0;top:0;height:10px;width:96.0px"></div></div>
<div class="a" style="left:1873.0px;top:450px;color:#b4b4b4;font-weight:400;font-size:12px;letter-spacing:-0.634px;">2744</div>
<div class="row" style="top:478px;background:#353535"><div class="a c" style="left:0;top:0;height:10px;width:100.0px"></div></div>
<div class="a" style="left:1873.0px;top:474px;color:#b4b4b4;font-weight:400;font-size:12px;letter-spacing:-0.634px;">2840</div>
<div class="row" style="top:502px;background:#353535"><div class="a c" style="left:0;top:0;height:10px;width:197.0px"></div></div>
<div class="a" style="left:1873.0px;top:498px;color:#b4b4b4;font-weight:400;font-size:12px;letter-spacing:-0.634px;">5608</div>
<div class="row" style="top:526px;background:#353535"><div class="a c" style="left:0;top:0;height:10px;width:135.0px"></div></div>
<div class="a" style="left:1873.0px;top:522px;color:#b4b4b4;font-weight:400;font-size:12px;letter-spacing:-0.634px;">3852</div>
<div class="row" style="top:550px;background:#353535"><div class="a c" style="left:0;top:0;height:10px;width:135.0px"></div></div>
<div class="a" style="left:1873.0px;top:546px;color:#b4b4b4;font-weight:400;font-size:12px;letter-spacing:-0.634px;">3852</div>
<div class="row" style="top:574px;background:#353535"><div class="a r" style="left:0;top:0;height:10px;width:71.0px"></div></div>
<div class="a" style="left:1873.0px;top:570px;color:#b4b4b4;font-weight:400;font-size:12px;letter-spacing:-0.634px;">2028</div>
<div class="a" style="left:1291px;top:592px;width:612px;height:22px;background:#8b8159;"></div>
<div class="row" style="top:598px;background:#322e27"><div class="a c" style="left:0;top:0;height:10px;width:222.0px"></div></div>
<div class="a" style="left:1873.0px;top:594px;color:#c4bc9c;font-weight:400;font-size:12px;letter-spacing:-0.634px;">6332</div>
<div class="row" style="top:622px;background:#353535"><div class="a c" style="left:0;top:0;height:10px;width:159.0px"></div></div>
<div class="a" style="left:1873.0px;top:618px;color:#b4b4b4;font-weight:400;font-size:12px;letter-spacing:-0.634px;">4520</div>
<div class="row" style="top:646px;background:#353535"><div class="a c" style="left:0;top:0;height:10px;width:159.0px"></div></div>
<div class="a" style="left:1873.0px;top:642px;color:#b4b4b4;font-weight:400;font-size:12px;letter-spacing:-0.634px;">4520</div>
<div class="row" style="top:670px;background:#353535"><div class="a c" style="left:0;top:0;height:10px;width:181.0px"></div></div>
<div class="a" style="left:1873.0px;top:666px;color:#b4b4b4;font-weight:400;font-size:12px;letter-spacing:-0.634px;">5162</div>
<div class="row" style="top:694px;background:#353535"><div class="a c" style="left:0;top:0;height:10px;width:180.0px"></div></div>
<div class="a" style="left:1873.0px;top:690px;color:#b4b4b4;font-weight:400;font-size:12px;letter-spacing:-0.634px;">5130</div>
<div class="row" style="top:718px;background:#353535"><div class="a c" style="left:0;top:0;height:10px;width:150.0px"></div></div>
<div class="a" style="left:1873.0px;top:714px;color:#b4b4b4;font-weight:400;font-size:12px;letter-spacing:-0.634px;">4274</div>
<div class="row" style="top:742px;background:#353535"><div class="a c" style="left:0;top:0;height:10px;width:219.0px"></div></div>
<div class="a" style="left:1873.0px;top:738px;color:#b4b4b4;font-weight:400;font-size:12px;letter-spacing:-0.634px;">6244</div>
<div class="row" style="top:766px;background:#353535"><div class="a r" style="left:0;top:0;height:10px;width:17.0px"></div></div>
<div class="a" style="left:1858.2px;top:762px;color:#b4b4b4;font-weight:400;font-size:12px;letter-spacing:-0.632px;">495.628</div>
<div class="row" style="top:790px;background:#353535"><div class="a r" style="left:0;top:0;height:10px;width:12.5px"></div></div>
<div class="a" style="left:1858.2px;top:786px;color:#b4b4b4;font-weight:400;font-size:12px;letter-spacing:-0.632px;">353.628</div>
<div class="row" style="top:814px;background:#353535"><div class="a r" style="left:0;top:0;height:10px;width:12.5px"></div></div>
<div class="a" style="left:1858.2px;top:810px;color:#b4b4b4;font-weight:400;font-size:12px;letter-spacing:-0.632px;">353.628</div>
<div class="row" style="top:838px;background:#353535"><div class="a r" style="left:0;top:0;height:10px;width:17.0px"></div></div>
<div class="a" style="left:1858.2px;top:834px;color:#b4b4b4;font-weight:400;font-size:12px;letter-spacing:-0.632px;">495.628</div>
<div class="row" style="top:862px;background:#353535"><div class="a c" style="left:0;top:0;height:10px;width:237.0px"></div></div>
<div class="a" style="left:1873.0px;top:858px;color:#b4b4b4;font-weight:400;font-size:12px;letter-spacing:-0.634px;">6756</div>
<div class="row" style="top:886px;background:#353535"><div class="a c" style="left:0;top:0;height:10px;width:135.0px"></div></div>
<div class="a" style="left:1873.0px;top:882px;color:#b4b4b4;font-weight:400;font-size:12px;letter-spacing:-0.634px;">3852</div>
<div class="row" style="top:910px;background:#353535"><div class="a r" style="left:0;top:0;height:10px;width:53.0px"></div></div>
<div class="a" style="left:1873.0px;top:906px;color:#b4b4b4;font-weight:400;font-size:12px;letter-spacing:-0.634px;">1506</div>
<div class="row" style="top:934px;background:#353535"><div class="a r" style="left:0;top:0;height:10px;width:12.5px"></div></div>
<div class="a" style="left:1858.2px;top:930px;color:#b4b4b4;font-weight:400;font-size:12px;letter-spacing:-0.632px;">353.628</div>
<div class="row" style="top:958px;background:#353535"><div class="a r" style="left:0;top:0;height:10px;width:12.5px"></div></div>
<div class="a" style="left:1858.2px;top:954px;color:#b4b4b4;font-weight:400;font-size:12px;letter-spacing:-0.632px;">353.628</div>
<div class="row" style="top:982px;background:#353535"><div class="a c" style="left:0;top:0;height:10px;width:260.0px"></div></div>
<div class="a" style="left:1873.0px;top:978px;color:#b4b4b4;font-weight:400;font-size:12px;letter-spacing:-0.634px;">7404</div>
<div class="row" style="top:1006px;background:#353535"><div class="a c" style="left:0;top:0;height:10px;width:205.0px"></div></div>
<div class="a" style="left:1873.0px;top:1002px;color:#b4b4b4;font-weight:400;font-size:12px;letter-spacing:-0.634px;">5850</div>
<svg class="a" style="left:1445px;top:602px" width="14" height="20"><path d="M1,1V15L4.5,11.5L7,17L9,16L6.5,10.5H11Z" fill="#fff" stroke="#000" stroke-width="1"/></svg>
<div class="a" style="left:7.4px;top:1007px;color:#d6d6d6;font-weight:400;font-size:12px;letter-spacing:0.428px;">Model</div>
<div class="a" style="left:56.2px;top:1007px;color:#d6d6d6;font-weight:400;font-size:12px;letter-spacing:-0.402px;">Pta ZZVV</div>
<div class="a" style="left:124.5px;top:1007px;color:#d6d6d6;font-weight:400;font-size:12px;">1</div>
<div class="a" style="left:150.6px;top:1007px;color:#d6d6d6;font-weight:400;font-size:12px;">2</div>
<div class="a" style="left:177.4px;top:1007px;color:#d6d6d6;font-weight:400;font-size:12px;">3</div>
<div class="a" style="left:204.2px;top:1007px;color:#d6d6d6;font-weight:400;font-size:12px;">4</div>
<div class="a" style="left:232px;top:1007px;color:#d6d6d6;font-weight:400;font-size:12px;">5</div>
<div class="a" style="left:258.4px;top:1007px;color:#d6d6d6;font-weight:400;font-size:12px;">6</div>
<div class="a" style="left:285.2px;top:1007px;color:#d6d6d6;font-weight:400;font-size:12px;">7</div>
<div class="a" style="left:312px;top:1007px;color:#d6d6d6;font-weight:400;font-size:12px;">8</div>
<div class="a" style="left:339.8px;top:1007px;color:#d6d6d6;font-weight:400;font-size:12px;">9</div>
<div class="a" style="left:361.5px;top:1007px;color:#d6d6d6;font-weight:400;font-size:12px;letter-spacing:0.341px;">10</div>
<div class="a" style="left:388.3px;top:1007px;color:#d6d6d6;font-weight:400;font-size:12px;letter-spacing:-0.029px;">Detalle-1</div>
<div class="a" style="left:450.2px;top:1007px;color:#d6d6d6;font-weight:400;font-size:12px;letter-spacing:0.059px;">Detalle-2</div>
<svg class="a" style="left:512px;top:1008px" width="11" height="11"><path d="M3.5,0.5H6.5V3.5H9.5V6.5H6.5V9.5H3.5V6.5H0.5V3.5H3.5Z" fill="none" stroke="#b4b4b4" stroke-width="1"/></svg>
<div class="ck" style="left:5px"></div>
<div class="a" style="left:21.2px;top:1033px;color:#8a8a8a;font-weight:400;font-size:12px;letter-spacing:-0.530px;">End</div>
<div class="ck" style="left:48px"></div>
<div class="a" style="left:64.3px;top:1033px;color:#8a8a8a;font-weight:400;font-size:12px;letter-spacing:-0.072px;">Near</div>
<div class="ck" style="left:96px;background:#c8c8c8"></div><svg class="a" style="left:96px;top:1033px" width="13" height="13"><path d="M2.5,6.5L5,9.5L10.5,3" fill="none" stroke="#8a8a8a" stroke-width="1.2"/></svg>
<div class="a" style="left:112.7px;top:1033px;color:#8a8a8a;font-weight:400;font-size:12px;letter-spacing:0.235px;">Point</div>
<div class="ck" style="left:147px"></div>
<div class="a" style="left:163.7px;top:1033px;color:#8a8a8a;font-weight:400;font-size:12px;letter-spacing:0.778px;">Mid</div>
<div class="ck" style="left:191px"></div>
<div class="a" style="left:207.4px;top:1033px;color:#8a8a8a;font-weight:400;font-size:12px;letter-spacing:-0.458px;">Cen</div>
<div class="ck" style="left:235px"></div>
<div class="a" style="left:251px;top:1033px;color:#8a8a8a;font-weight:400;font-size:12px;letter-spacing:0.878px;">Int</div>
<div class="ck" style="left:272px"></div>
<div class="a" style="left:288.4px;top:1033px;color:#8a8a8a;font-weight:400;font-size:12px;letter-spacing:-0.320px;">Perp</div>
<div class="ck" style="left:319px"></div>
<div class="a" style="left:335.7px;top:1033px;color:#8a8a8a;font-weight:400;font-size:12px;letter-spacing:-0.030px;">Tan</div>
<div class="ck" style="left:362px"></div>
<div class="a" style="left:378.4px;top:1033px;color:#8a8a8a;font-weight:400;font-size:12px;letter-spacing:-0.053px;">Quad</div>
<div class="ck" style="left:414px;background:#c8c8c8"></div><svg class="a" style="left:414px;top:1033px" width="13" height="13"><path d="M2.5,6.5L5,9.5L10.5,3" fill="none" stroke="#8a8a8a" stroke-width="1.2"/></svg>
<div class="a" style="left:430.5px;top:1033px;color:#8a8a8a;font-weight:400;font-size:12px;letter-spacing:0.271px;">Knot</div>
<div class="ck" style="left:462px;background:#c8c8c8"></div><svg class="a" style="left:462px;top:1033px" width="13" height="13"><path d="M2.5,6.5L5,9.5L10.5,3" fill="none" stroke="#8a8a8a" stroke-width="1.2"/></svg>
<div class="a" style="left:478px;top:1033px;color:#8a8a8a;font-weight:400;font-size:12px;letter-spacing:-0.326px;">Vertex</div>
<div class="ck" style="left:518px;top:1034px;width:11px;height:11px;background:#b8b8b8"></div>
<div class="a" style="left:533.5px;top:1033px;color:#8a8a8a;font-weight:400;font-size:12px;letter-spacing:0.073px;">Project</div>
<div class="a" style="left:586px;top:1034px;width:11px;height:11px;background:#7a7a7a;border:1px solid #5a9ae0"></div>
<div class="a" style="left:601.5px;top:1033px;color:#e0e0e0;font-weight:400;font-size:12px;letter-spacing:-0.172px;">Disable</div>
<div class="a" style="left:0px;top:1058px;width:45px;height:14px;background:#707070;"></div>
<div class="a" style="left:3.5px;top:1060px;color:#e8e8e8;font-weight:700;font-size:12px;letter-spacing:0.155px;">World</div>
<div class="a" style="left:59.6px;top:1060px;color:#cfcfcf;font-weight:400;font-size:12px;letter-spacing:-0.616px;">x 20536.133</div>
<div class="a" style="left:145px;top:1060px;color:#cfcfcf;font-weight:400;font-size:12px;letter-spacing:-0.342px;">y -27286.686</div>
<div class="a" style="left:248px;top:1060px;color:#cfcfcf;font-weight:400;font-size:12px;letter-spacing:-0.529px;">z 0.000</div>
<div class="a" style="left:324px;top:1060px;color:#cfcfcf;font-weight:400;font-size:12px;letter-spacing:0.266px;">Millimeters</div>
<div class="a" style="left:417px;top:1060px;color:#cfcfcf;font-weight:400;font-size:12px;letter-spacing:-0.418px;">JEX::Despiece::Corte Exterior</div>
<div class="a" style="left:573.6px;top:1060px;color:#cfcfcf;font-weight:400;font-size:12px;letter-spacing:-0.404px;">Grid Snap</div>
<div class="a" style="left:638.5px;top:1060px;color:#cfcfcf;font-weight:400;font-size:12px;letter-spacing:0.246px;">Ortho</div>
<div class="a" style="left:683px;top:1060px;color:#cfcfcf;font-weight:400;font-size:12px;letter-spacing:-0.138px;">Planar</div>
<div class="a" style="left:730.5px;top:1060px;color:#cfcfcf;font-weight:400;font-size:12px;letter-spacing:-0.215px;">Osnap</div>
<div class="a" style="left:778px;top:1060px;color:#cfcfcf;font-weight:400;font-size:12px;letter-spacing:-0.174px;">SmartTrack</div>
<div class="a" style="left:852px;top:1060px;color:#cfcfcf;font-weight:400;font-size:12px;letter-spacing:0.219px;">Gumball</div>
<div class="a" style="left:911px;top:1060px;color:#cfcfcf;font-weight:400;font-size:12px;letter-spacing:-0.028px;">Record History</div>
<div class="a" style="left:1003px;top:1060px;color:#cfcfcf;font-weight:400;font-size:12px;letter-spacing:0.066px;">Filter</div>
<div class="a" style="left:1037.5px;top:1060px;color:#cfcfcf;font-weight:400;font-size:12px;letter-spacing:-0.567px;">CPU use: 1.7 %</div>
<div class="a" style="left:401px;top:1059px;width:14px;height:13px;background:#45bfae;border:1px solid #1a1a1a"></div>
<div class="a" style="left:1909px;top:1064px;width:3px;height:8px;background:#dcdcdc;"></div>
</body></html>
